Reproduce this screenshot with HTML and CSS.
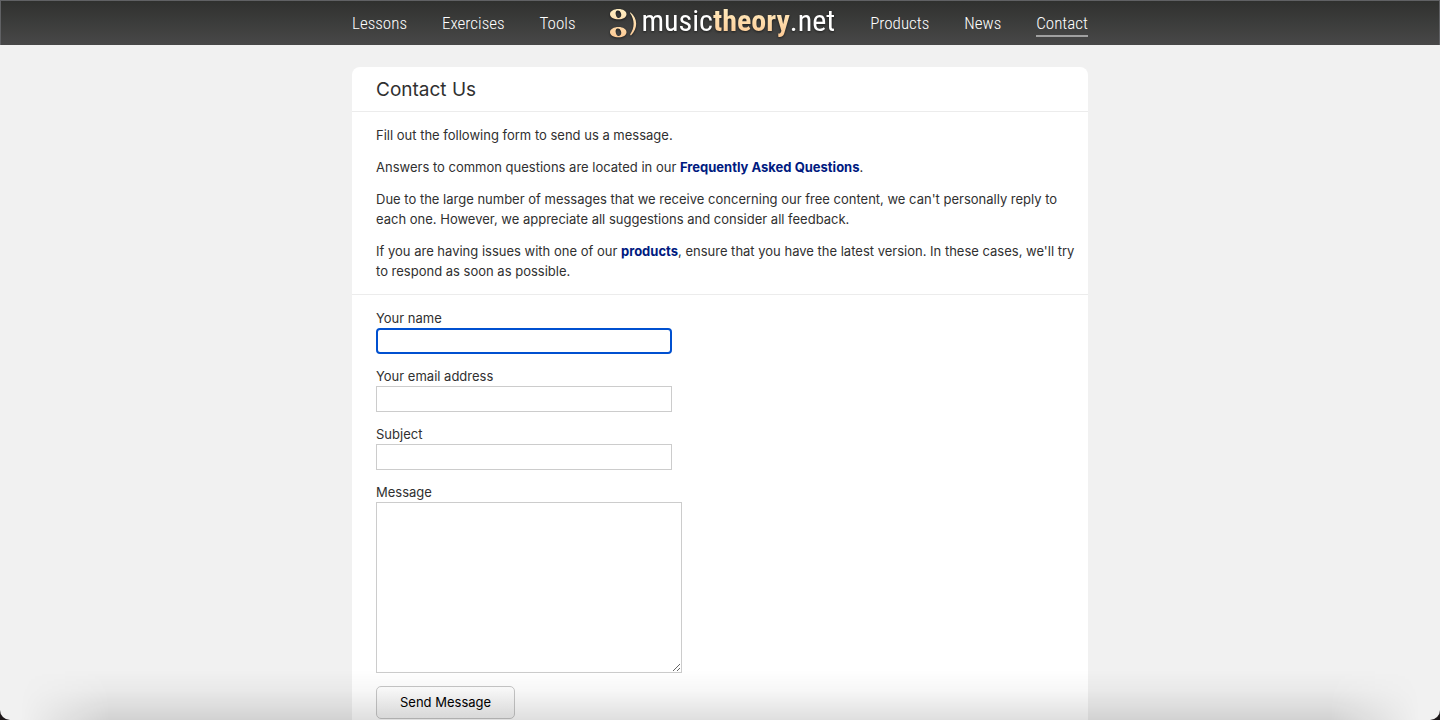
FILE: index.html
```
<!DOCTYPE html>
<html lang="en">
<head>
<meta charset="utf-8">
<meta name="viewport" content="width=device-width, initial-scale=1">
<title>Contact Us - musictheory.net</title>
<link rel="stylesheet" href="styles.css">
</head>
<body>
<div class="window">
  <header class="topbar">
    <nav class="nav">
      <a class="nav-link" href="#lessons">Lessons</a>
      <a class="nav-link" href="#exercises">Exercises</a>
      <a class="nav-link" href="#tools">Tools</a>
      <a class="logo" href="#home">
        <svg class="logo-mark" width="28" height="32" viewBox="0 0 28 32" aria-hidden="true">
          <defs>
            <linearGradient id="gold" x1="0" y1="0" x2="0" y2="32" gradientUnits="userSpaceOnUse">
              <stop offset="0" stop-color="#fff0c4"/>
              <stop offset="1" stop-color="#fdc994"/>
            </linearGradient>
          </defs>
          <path fill="url(#gold)" fill-rule="evenodd" d="M8.500 2C13 2 16.500 4.200 16.500 7.200S13 12.300 8.500 12.300S0 10.200 0 7.200S4 2 8.500 2ZM7.300 3.600C5.600 4 5.200 6.200 6 8.400S8.300 11.300 9.700 10.800S11.700 8.300 10.900 6.100S8.900 3.200 7.300 3.600Z"/>
          <path fill="url(#gold)" fill-rule="evenodd" d="M8.500 20C13 20 16.500 22.200 16.500 25.200S13 30.300 8.500 30.300S0 28.200 0 25.200S4 20 8.500 20ZM7.300 21.600C5.600 22 5.200 24.200 6 26.400S8.300 29.300 9.700 28.800S11.700 26.300 10.900 24.100S8.900 21.200 7.300 21.600Z"/>
          <path fill="url(#gold)" d="M20.300 5.300C27.800 11 28.200 21 20.900 28.400L20.100 27.400C24.900 20.500 24.700 12.500 20 6Z"/>
        </svg>
        <span class="logo-text">music<b class="logo-gold">theory</b>.net</span>
      </a>
      <a class="nav-link" href="#products">Products</a>
      <a class="nav-link" href="#news">News</a>
      <a class="nav-link nav-current" href="#contact" aria-current="page">Contact</a>
    </nav>
  </header>
  <main class="card">
    <h1 class="title">Contact Us</h1>
    <section class="intro">
      <p>Fill out the following form to send us a message.</p>
      <p>Answers to common questions are located in our <a href="#faq">Frequently Asked Questions</a>.</p>
      <p>Due to the large number of messages that we receive concerning our free content, we can't personally reply to each one. However, we appreciate all suggestions and consider all feedback.</p>
      <p>If you are having issues with one of our <a href="#products">products</a>, ensure that you have the latest version. In these cases, we'll try to respond as soon as possible.</p>
    </section>
    <form class="form">
      <div class="field">
        <label for="name">Your name</label>
        <input class="input input-active" id="name" type="text">
      </div>
      <div class="field">
        <label for="email">Your email address</label>
        <input class="input" id="email" type="email">
      </div>
      <div class="field">
        <label for="subject">Subject</label>
        <input class="input" id="subject" type="text">
      </div>
      <div class="field">
        <label for="message">Message</label>
        <textarea class="input message" id="message"></textarea>
      </div>
      <button class="send" type="button">Send Message</button>
    </form>
  </main>
  <div class="shade"></div>
</div>
</body>
</html>
```
FILE: styles.css
```
* {
  box-sizing: border-box;
}

html {
  background: #1c1719;
}

body {
  margin: 0;
  font: 13px/20px Inter, "Liberation Sans", sans-serif;
  color: #303030;
}

.window {
  position: relative;
  height: 100vh;
  overflow: hidden;
  background: #f1f1f1;
  border-radius: 0 0 10px 10px;
}

.topbar {
  height: 45px;
  padding: 0 16px;
  background: linear-gradient(#30312f, #484848);
  border: 1px solid #606164;
  border-bottom: 0;
}

.nav {
  display: flex;
  justify-content: space-between;
  max-width: 736px;
  height: 100%;
  margin: 0 auto;
  font-family: "Liberation Sans Narrow", "Arial Narrow", "Roboto Condensed", "Open Sans Condensed", "Liberation Sans", sans-serif;
}

.nav-link {
  align-self: flex-start;
  margin-top: 10px;
  font-size: 17px;
  font-weight: 300;
  line-height: 24px;
  color: #fff;
  text-decoration: none;
}

.nav-current {
  border-bottom: 2px solid #a0a0a0;
}

.logo {
  display: flex;
  gap: 3px;
  padding-top: 6px;
  color: #fff;
  text-decoration: none;
  filter: drop-shadow(0 1px 1px #0008);
}

.logo-text {
  font-size: 30px;
  line-height: 28px;
}

.logo-gold {
  background: linear-gradient(#fff0c4, #fdc994);
  background-clip: text;
  color: transparent;
}

.card {
  max-width: 736px;
  min-height: 100vh;
  margin: 22px auto 0;
  background: #fff;
  border-radius: 8px;
}

.title {
  margin: 0;
  padding: 9px 24px 7px;
  font-size: 19px;
  line-height: 28px;
  font-weight: 400;
  border-bottom: 1px solid #ececec;
}

.intro {
  display: grid;
  gap: 12px;
  padding: 13px 8px 13px 24px;
  border-bottom: 1px solid #ececec;
}

.intro p {
  margin: 0;
}

.intro a {
  font-weight: 700;
  color: #001a80;
  text-decoration: none;
}

.form {
  padding: 13px 24px;
}

.field {
  display: flex;
  flex-direction: column;
  align-items: flex-start;
  margin-bottom: 12px;
}

.input {
  width: 296px;
  max-width: 100%;
  height: 26px;
  padding: 2px 4px;
  font: inherit;
  background: #fff;
  border: 1px solid #ccc;
  border-radius: 0;
}

.input-active {
  border: 2px solid #0050d0;
  border-radius: 4px;
}

.message {
  width: 306px;
  height: 171px;
}

.send {
  margin-top: 1px;
  padding: 6px 23px;
  font: inherit;
  line-height: 19px;
  color: #000;
  background: linear-gradient(#fff, #f6f6f6);
  border: 1px solid #c8c8c8;
  border-radius: 5px;
}

.shade {
  position: absolute;
  inset: auto 0 0;
  height: 50px;
  pointer-events: none;
  background: linear-gradient(transparent, #00000008 40%, #00000020);
  mask-image: linear-gradient(90deg, transparent 20px, #000 110px, #000 calc(100% - 110px), transparent calc(100% - 20px));
}
```
